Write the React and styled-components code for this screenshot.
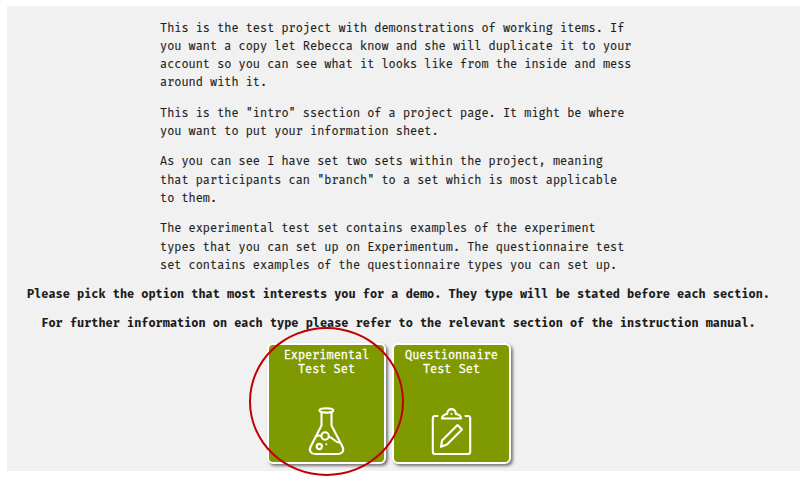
import React from "react";
import styled, { createGlobalStyle } from "styled-components";

const GlobalStyle = createGlobalStyle`
  *, *::before, *::after { box-sizing: border-box; }
  body {
    margin: 0;
    background: #fff;
    color: #1c1c1c;
    font-family: "Fira Mono", "Fira Code", "DejaVu Sans Mono", monospace;
    font-size: 11.91px;
  }
`;

const Page = styled.main`
  width: 810px;
  height: 483px;
  padding: 6px 10px 12px 7px;
  overflow: hidden;
`;

const Panel = styled.section`
  height: 465px;
  padding-top: 12.6px;
  background: #f1f1f1;
`;

const Intro = styled.div`
  width: 480px;
  margin-left: 153px;
  -webkit-text-stroke: 0.15px #1c1c1c;
`;

const Paragraph = styled.p`
  margin: 0 0 12px;
  line-height: 18.3px;
  white-space: pre-line;

  &:last-child {
    margin-bottom: 10.8px;
  }
`;

const Notice = styled.p`
  margin: 0 0 11px;
  padding-right: 10px;
  line-height: 18px;
  font-weight: bold;
  text-align: center;
  white-space: nowrap;
`;

const Cards = styled.div`
  display: flex;
  gap: 6px;
  margin-left: 260px;
`;

const Card = styled.button`
  position: relative;
  display: flex;
  flex-direction: column;
  align-items: center;
  justify-content: space-between;
  width: 119px;
  height: 121px;
  padding: 3px 0 6px;
  border: 2px solid #fff;
  border-radius: 6px;
  background: #7f9900;
  box-shadow: 2px 2px 3px rgba(0, 0, 0, 0.5);
  color: #fff;
  font: inherit;
  line-height: 14.3px;
`;

const CardTitle = styled.span`
  white-space: pre-line;
  -webkit-text-stroke: 0.3px #fff;
`;

const Icon = styled.svg`
  display: block;
  width: 42px;
  height: 50px;
  fill: none;
  stroke: #fff;
  stroke-width: 2.1;
  stroke-linecap: round;
  stroke-linejoin: round;
`;

const Highlight = styled.span`
  position: absolute;
  z-index: 1;
  top: -18px;
  left: -20px;
  width: 155px;
  height: 149px;
  border: 2px solid #c00000;
  border-radius: 50%;
  pointer-events: none;
`;

const paragraphs = [
  `This is the test project with demonstrations of working items. If
you want a copy let Rebecca know and she will duplicate it to your
account so you can see what it looks like from the inside and mess
around with it.`,
  `This is the "intro" ssection of a project page. It might be where
you want to put your information sheet.`,
  `As you can see I have set two sets within the project, meaning
that participants can "branch" to a set which is most applicable
to them.`,
  `The experimental test set contains examples of the experiment
types that you can set up on Experimentum. The questionnaire test
set contains examples of the questionnaire types you can set up.`,
];

const notices = [
  "Please pick the option that most interests you for a demo. They type will be stated before each section.",
  "For further information on each type please refer to the relevant section of the instruction manual.",
];

function FlaskIcon() {
  return (
    <Icon viewBox="0 0 42 50">
      <ellipse cx="20.300" cy="4.400" rx="6.900" ry="2.200" />
      <path d="M15.500 7v12.500L4.700 40.500c-2.200 4.200 .2 7.500 4 7.500h23.700c3.800 0 6.200-3.300 4-7.500L25.500 19.500V7" />
      <path d="M10 30.300Q12.500 29 15.300 29.700M23 31C27.500 31 27.500 36.500 34 36.500" />
      <circle cx="19.100" cy="30" r="3.700" />
      <circle cx="13.300" cy="40.500" r="2.600" />
      <circle cx="20.300" cy="38.300" r="1" fill="#fff" stroke="none" />
    </Icon>
  );
}

function ClipboardIcon() {
  return (
    <Icon viewBox="0 0 42 50">
      <path d="M6.500 10H4Q1.800 10 1.800 12.500V45.500Q1.800 48 4 48H37Q39.200 48 39.200 45.500V12.500Q39.200 10 37 10H34.500" />
      <path d="M11 12.500H30C30 9 27.500 8.500 25 8C24 1.500 17 1.500 16 8C13.500 8.500 11 9 11 12.500Z" />
      <circle cx="20.500" cy="8" r="1" fill="#fff" stroke="none" />
      <path d="M26.500 19L31 23.500L16 38.500L10 40.800L11 34.500Z" />
    </Icon>
  );
}

export default function App() {
  return (
    <>
      <GlobalStyle />
      <Page>
        <Panel>
          <Intro>
            {paragraphs.map((text) => (
              <Paragraph key={text}>{text}</Paragraph>
            ))}
          </Intro>
          {notices.map((text) => (
            <Notice key={text}>{text}</Notice>
          ))}
          <Cards>
            <Card type="button">
              <CardTitle>{"Experimental\nTest Set"}</CardTitle>
              <FlaskIcon />
              <Highlight />
            </Card>
            <Card type="button">
              <CardTitle>{"Questionnaire\nTest Set"}</CardTitle>
              <ClipboardIcon />
            </Card>
          </Cards>
        </Panel>
      </Page>
    </>
  );
}
